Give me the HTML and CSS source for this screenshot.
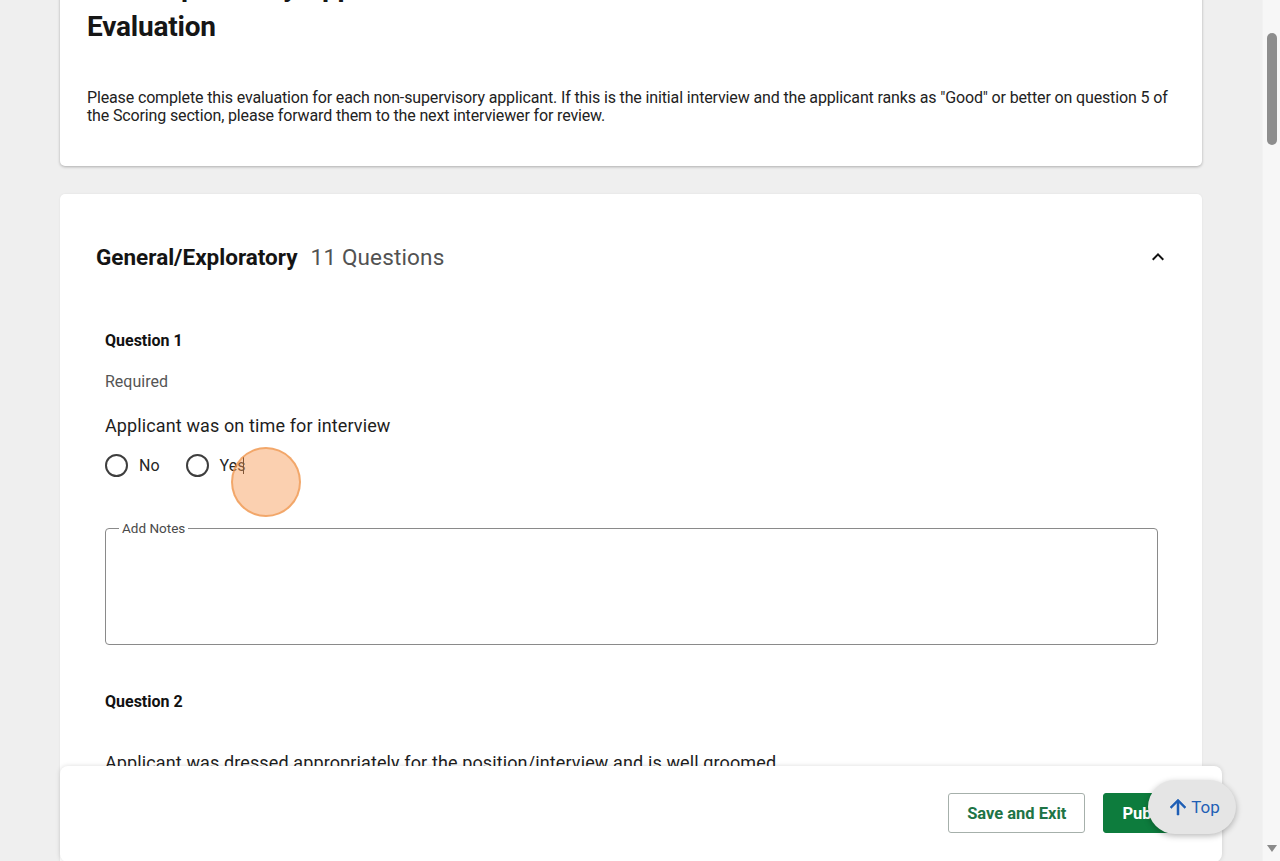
FILE: index.html
```html
<!DOCTYPE html>
<html lang="en">
<head>
<meta charset="utf-8">
<title>Non-Supervisory Applicant Evaluation</title>
<link rel="stylesheet" href="styles.css">
</head>
<body>
<div class="window">
  <div class="viewport">
    <main class="page">
      <section class="card intro">
        <h1 class="title">Non-Supervisory Applicant Evaluation</h1>
        <p class="desc">Please complete this evaluation for each non-supervisory applicant. If this is the initial interview and the applicant ranks as "Good" or better on question 5 of the Scoring section, please forward them to the next interviewer for review.</p>
      </section>

      <section class="card section">
        <header class="section-head">
          <h2 class="section-title"><span class="section-name">General/Exploratory</span><span class="count">11 Questions</span></h2>
          <button class="collapse" aria-label="Collapse section">
            <svg width="24" height="24" viewBox="0 0 24 24"><path d="M7.41 15.41 12 10.83l4.59 4.58L18 14l-6-6-6 6z" fill="#111"/></svg>
          </button>
        </header>

        <div class="questions">
          <div class="question">
            <div class="q-label">Question 1</div>
            <div class="q-req">Required</div>
            <div class="q-text">Applicant was on time for interview</div>
            <div class="options">
              <label class="opt"><span class="radio"></span><span>No</span></label>
              <label class="opt"><span class="radio"></span><span class="opt-text">Yes<span class="caret"></span></span></label>
            </div>
            <fieldset class="notes">
              <legend>Add Notes</legend>
              <div class="notes-area"></div>
            </fieldset>
          </div>

          <div class="question q2">
            <div class="q-label">Question 2</div>
            <div class="q-text">Applicant was dressed appropriately for the position/interview and is well groomed</div>
          </div>
        </div>
      </section>
    </main>

    <div class="click-dot"></div>

    <footer class="actions">
      <button class="btn btn-outline">Save and Exit</button>
      <button class="btn btn-primary">Publish</button>
    </footer>

    <button class="to-top">
      <svg width="24" height="24" viewBox="0 0 24 24"><path d="M4 12l1.41 1.41L11 7.83V20h2V7.83l5.58 5.59L20 12l-8-8-8 8z" fill="#1f5fb5" stroke="#1f5fb5" stroke-width="0.5"/></svg>
      <span>Top</span>
    </button>
  </div>

  <div class="scrollbar">
    <div class="thumb"></div>
    <div class="arrow-down"></div>
  </div>
</div>
</body>
</html>
```

FILE: styles.css
```css
* { box-sizing: border-box; }

html, body {
  margin: 0;
  padding: 0;
  height: 100%;
}

body {
  font-family: Roboto, "Liberation Sans", Arial, sans-serif;
  color: #1c1c1c;
  background: #efefef;
  overflow: hidden;
}

.window {
  display: flex;
  width: 1280px;
  height: 861px;
}

.viewport {
  position: relative;
  flex: 1;
  overflow: hidden;
  background: #efefef;
}

.page {
  padding: 0 60px;
}

.card {
  background: #fff;
  border-radius: 5px;
  box-shadow: 0 1px 3px rgba(0, 0, 0, 0.28);
}

.intro {
  margin-top: -57px;
  padding: 24px 27px 41px;
}

.title {
  margin: 0;
  max-width: 400px;
  font-size: 28px;
  line-height: 40px;
  font-weight: 700;
  color: #161616;
  letter-spacing: -0.2px;
}

.desc {
  margin: 42px 0 0;
  font-size: 16px;
  line-height: 18px;
  color: #222;
  letter-spacing: -0.14px;
}

.section {
  margin-top: 28px;
  padding: 40px 32px 200px 36px;
  box-shadow: 0 0 2px rgba(0, 0, 0, 0.08);
}

.section-head {
  display: flex;
  align-items: center;
  justify-content: space-between;
  height: 46px;
}

.section-title {
  margin: 0;
  font-size: 22.5px;
  font-weight: 400;
  display: flex;
  align-items: baseline;
  gap: 13px;
}

.section-name {
  font-weight: 700;
  color: #141414;
  letter-spacing: 0;
}

.count {
  color: #525252;
  letter-spacing: 0.15px;
}

.collapse {
  width: 24px;
  height: 24px;
  padding: 0;
  border: 0;
  background: none;
  display: flex;
}

.questions {
  padding: 0 12px 0 9px;
}

.question {
  margin-top: 51px;
}

.q-label {
  font-size: 16px;
  line-height: 20px;
  font-weight: 700;
  color: #111;
}

.q-req {
  margin-top: 21px;
  font-size: 16px;
  line-height: 20px;
  color: #555;
}

.q-text {
  margin-top: 22px;
  font-size: 18px;
  line-height: 24px;
  color: #1e1e1e;
  letter-spacing: 0.12px;
}

.options {
  margin-top: 15px;
  display: flex;
  gap: 26px;
  height: 24px;
  align-items: center;
}

.opt {
  display: flex;
  align-items: center;
  gap: 11px;
  font-size: 16px;
  color: #262626;
}

.opt-text {
  display: inline-flex;
  align-items: center;
}

.radio {
  width: 23px;
  height: 23px;
  border: 2px solid #3e3e3e;
  border-radius: 50%;
}

.caret {
  display: inline-block;
  width: 1px;
  height: 17px;
  margin-left: -2px;
  background: #222;
}

.notes {
  margin: 43px 0 0;
  padding: 0 12px 0 13px;
  border: 1px solid #8a8a8a;
  border-radius: 4px;
}

.notes legend {
  padding: 0 3px;
  font-size: 13.5px;
  line-height: 16px;
  color: #4a4a4a;
}

.notes-area {
  height: 108px;
}

.q2 {
  margin-top: 47px;
}

.q2 .q-text {
  margin-top: 39px;
}

.click-dot {
  position: absolute;
  left: 231px;
  top: 447px;
  width: 70px;
  height: 70px;
  border-radius: 50%;
  background: rgba(246, 150, 80, 0.45);
  border: 2px solid rgba(236, 140, 60, 0.6);
}

.actions {
  position: absolute;
  left: 60px;
  top: 766px;
  width: 1162px;
  height: 96px;
  background: #fff;
  border-radius: 8px;
  box-shadow: 0 0 5px rgba(0, 0, 0, 0.14);
  display: flex;
  justify-content: flex-end;
  align-items: flex-start;
  gap: 18px;
  padding: 27px 25px 0 0;
}

.btn {
  height: 40px;
  border-radius: 3px;
  font-family: inherit;
  font-size: 16.5px;
  font-weight: 700;
  padding: 0 18px;
  white-space: nowrap;
}

.btn-outline {
  background: #fff;
  border: 1px solid #a6b0ab;
  color: #1e7446;
}

.btn-primary {
  background: #0d7c3d;
  border: 1px solid #0d7c3d;
  color: #fff;
}

.to-top {
  position: absolute;
  left: 1148px;
  top: 780px;
  width: 88px;
  height: 54px;
  border: 0;
  border-radius: 27px;
  background: #e5e5e5;
  box-shadow: 0 2px 6px rgba(0, 0, 0, 0.28);
  display: flex;
  align-items: center;
  justify-content: center;
  gap: 1px;
  padding: 0 0 1px 2px;
  font-family: inherit;
  font-size: 17px;
  color: #1f5fb5;
}

.scrollbar {
  position: relative;
  width: 18px;
  background: #f7f7f7;
  border-left: 1px solid #f2f2f2;
}

.thumb {
  position: absolute;
  left: 4px;
  top: 33px;
  width: 10px;
  height: 112px;
  border-radius: 5px;
  background: #8d8d8d;
}

.arrow-down {
  position: absolute;
  left: 4px;
  top: 845px;
  width: 0;
  height: 0;
  border-left: 5px solid transparent;
  border-right: 5px solid transparent;
  border-top: 7px solid #8a8a8a;
}
```
